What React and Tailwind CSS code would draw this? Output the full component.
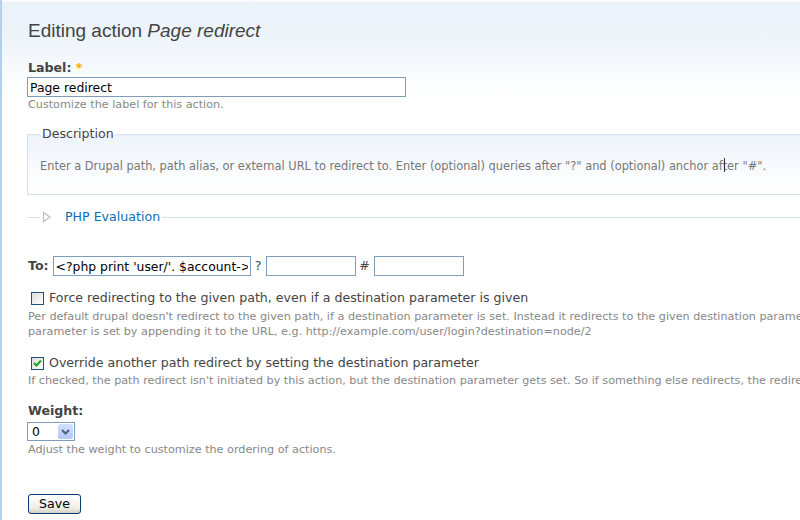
export default function App() {
  return (
    <div
      className="relative w-[800px] h-[520px] overflow-hidden border-l-2 border-[#b3cfea] bg-[linear-gradient(to_bottom,#ffffff_0px,#e9f1f9_3px,#eef4fa_40px,#ffffff_95px)] text-[#494949]"
      style={{ fontFamily: '"DejaVu Sans", Verdana, sans-serif' }}
    >
      <div className="w-[960px] pl-[25px]">
        {/* Titel */}
        <h1
          className="pt-[19px] pl-px text-[19px] leading-[24px] text-[#444]"
          style={{ fontFamily: '"Liberation Sans", Arial, sans-serif' }}
        >
          Editing action <em>Page redirect</em>
        </h1>

        {/* Label */}
        <div className="mt-[17px]">
          <label className="block pl-px text-[12.6px] font-bold leading-[16px] text-[#444]">
            Label: <span className="text-[#f7a600]">*</span>
          </label>
          <input
            defaultValue="Page redirect"
            className="mt-[1px] block w-[379px] h-[20px] border border-[#7f9db9] bg-white px-[2px] text-[12.4px] text-black outline-none"
          />
          <div className="mt-[1px] pl-px text-[11.2px] leading-[14px] text-[#888]">
            Customize the label for this action.
          </div>
        </div>

        {/* Description fieldset */}
        <fieldset className="mt-[15px] w-[900px] border border-[#d3e2f0] bg-[linear-gradient(to_bottom,#edf3fa_0px,#ffffff_55px)] px-[12px] pb-[20px]">
          <legend className="px-[2px] text-[12.6px] leading-[14px] text-[#444]">Description</legend>
          <p className="mt-[17px] text-[11.4px] leading-[16px] text-[#777]">
            Enter a Drupal path, path alias, or external URL to redirect to. Enter (optional) queries after "?" and (optional) anchor af
            <span className="relative">
              t<span className="absolute left-[1px] top-[-1px] h-[14px] w-px bg-[#333]" />
            </span>
            er "#".
          </p>
        </fieldset>

        {/* PHP Evaluation, collapsed */}
        <div className="mt-[14px] flex items-center">
          <div className="h-px w-[13px] bg-[#d3e2f0]" />
          <svg width="10" height="12" viewBox="0 0 10 12" className="ml-[2px]">
            <path d="M1.5 1.5 L8 6 L1.5 10.5 Z" fill="#fff" stroke="#bdbdbd" strokeWidth="1.2" />
          </svg>
          <a className="ml-[13px] text-[12.6px] leading-[16px] text-[#0a6fb5]">PHP Evaluation</a>
          <div className="ml-[2px] h-px flex-1 bg-[#d3e2f0]" />
        </div>

        {/* To row */}
        <div className="mt-[31px] flex items-center text-[12.6px]">
          <span className="pl-px font-bold text-[#444]">To:</span>
          <input
            defaultValue="<?php print 'user/'. $account->"
            className="ml-[4px] h-[20px] w-[198px] border border-[#7f9db9] bg-white px-[2px] text-[12.4px] text-black outline-none"
          />
          <span className="w-[15px] text-center text-[#444]">?</span>
          <input className="h-[20px] w-[90px] border border-[#7f9db9] bg-white outline-none" />
          <span className="w-[18px] text-center text-[#444]">#</span>
          <input className="h-[20px] w-[90px] border border-[#7f9db9] bg-white outline-none" />
        </div>

        {/* Checkbox 1 */}
        <div className="mt-[14px] pl-[4px] flex items-center">
          <XpCheckbox />
          <span className="ml-[5px] text-[12.6px] leading-[16px] text-[#444]">
            Force redirecting to the given path, even if a destination parameter is given
          </span>
        </div>
        <div className="mt-[3px] pl-px whitespace-nowrap text-[11.2px] leading-[15px] text-[#888]">
          <div>
            Per default drupal doesn't redirect to the given path, if a destination parameter is set. Instead it redirects to the given destination parameter. Most times the destination
          </div>
          <div>parameter is set by appending it to the URL, e.g. http://example.com/user/login?destination=node/2</div>
        </div>

        {/* Checkbox 2 */}
        <div className="mt-[16px] pl-[4px] flex items-center">
          <XpCheckbox checked />
          <span className="ml-[5px] text-[12.6px] leading-[16px] text-[#444]">
            Override another path redirect by setting the destination parameter
          </span>
        </div>
        <div className="mt-[2px] pl-px whitespace-nowrap text-[11.2px] leading-[15px] text-[#888]">
          If checked, the path redirect isn't initiated by this action, but the destination parameter gets set. So if something else redirects, the redirect will use the destination.
        </div>

        {/* Weight */}
        <div className="mt-[15px]">
          <label className="block pl-px text-[12.6px] font-bold leading-[16px] text-[#444]">Weight:</label>
          <div className="mt-[3px] flex h-[19px] w-[48px] items-center border border-[#7f9db9] bg-white">
            <span className="flex-1 pl-[4px] text-[12.4px] leading-[16px] text-black">0</span>
            <div className="mr-px flex h-[15px] w-[15px] items-center justify-center rounded-[2px] bg-[linear-gradient(to_bottom,#d2e0fd,#b1c8f6)]">
              <svg width="9" height="6" viewBox="0 0 9 6">
                <path d="M1 1 L4.5 4.5 L8 1" fill="none" stroke="#4d6185" strokeWidth="2" />
              </svg>
            </div>
          </div>
          <div className="mt-[2px] pl-px text-[11.2px] leading-[14px] text-[#888]">
            Adjust the weight to customize the ordering of actions.
          </div>
        </div>

        {/* Save */}
        <button className="mt-[37px] ml-[1px] h-[20px] w-[53px] rounded-[3px] border border-[#003c74] bg-[linear-gradient(to_bottom,#ffffff,#f0efe6_70%,#d6d0c5)] text-[12.6px] leading-[16px] text-black">
          Save
        </button>
      </div>
    </div>
  );
}

function XpCheckbox({ checked = false }) {
  return (
    <span className="flex h-[13px] w-[13px] items-center justify-center border border-[#1c5180] bg-[linear-gradient(135deg,#dcdcd7,#ffffff)]">
      {checked && (
        <svg width="9" height="9" viewBox="0 0 9 9">
          <path d="M1 4 L3.5 6.5 L8 1.5" fill="none" stroke="#21a121" strokeWidth="2" />
        </svg>
      )}
    </span>
  );
}
